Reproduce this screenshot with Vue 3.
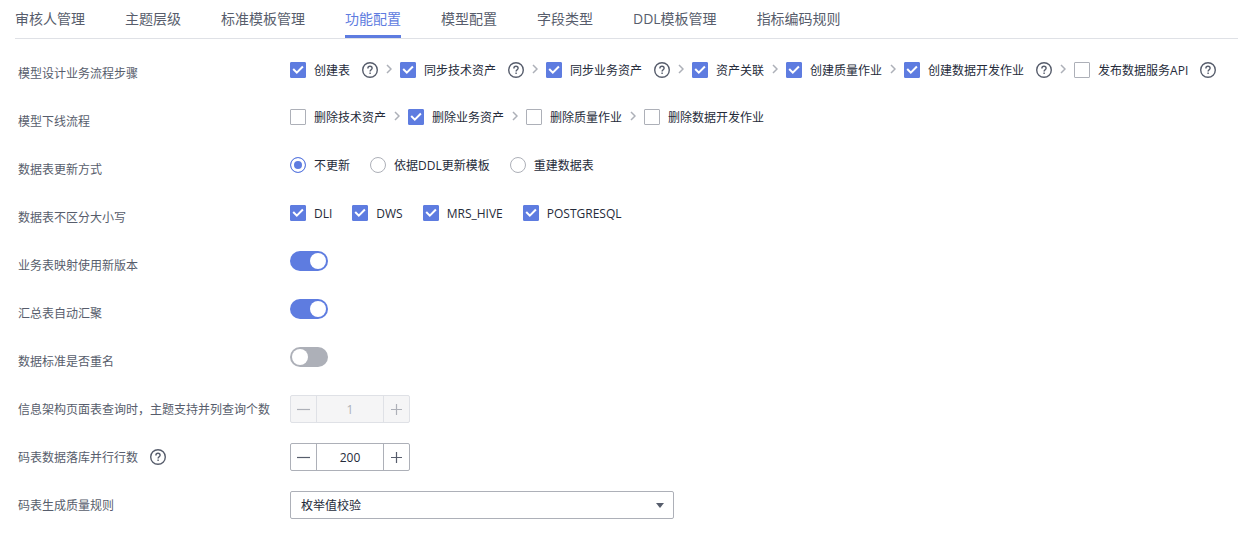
<script setup>
import { ref, reactive } from 'vue'

const tabs = ['审核人管理', '主题层级', '标准模板管理', '功能配置', '模型配置', '字段类型', 'DDL模板管理', '指标编码规则']
const activeTab = ref('功能配置')

const checkRows = reactive([
  {
    id: 'design',
    label: '模型设计业务流程步骤',
    steps: true,
    items: [
      { text: '创建表', checked: true, help: true },
      { text: '同步技术资产', checked: true, help: true },
      { text: '同步业务资产', checked: true, help: true },
      { text: '资产关联', checked: true },
      { text: '创建质量作业', checked: true },
      { text: '创建数据开发作业', checked: true, help: true },
      { text: '发布数据服务API', checked: false, help: true },
    ],
  },
  {
    id: 'offline',
    label: '模型下线流程',
    steps: true,
    items: [
      { text: '删除技术资产', checked: false },
      { text: '删除业务资产', checked: true },
      { text: '删除质量作业', checked: false },
      { text: '删除数据开发作业', checked: false },
    ],
  },
  { id: 'update', label: '数据表更新方式', radios: ['不更新', '依据DDL更新模板', '重建数据表'] },
  {
    id: 'case',
    label: '数据表不区分大小写',
    items: [
      { text: 'DLI', checked: true },
      { text: 'DWS', checked: true },
      { text: 'MRS_HIVE', checked: true },
      { text: 'POSTGRESQL', checked: true },
    ],
  },
])
const updateMode = ref('不更新')

const switches = reactive([
  { id: 'mapping', label: '业务表映射使用新版本', on: true },
  { id: 'summary', label: '汇总表自动汇聚', on: true },
  { id: 'rename', label: '数据标准是否重名', on: false },
])

const steppers = reactive([
  { id: 'query', label: '信息架构页面表查询时，主题支持并列查询个数', value: 1, disabled: true },
  { id: 'rows', label: '码表数据落库并行行数', value: 200, disabled: false, help: true },
])

const rule = ref('枚举值校验')
</script>

<template>
  <main class="page">
    <nav class="tabs" role="tablist">
      <button
        v-for="tab in tabs"
        :key="tab"
        type="button"
        role="tab"
        class="tab"
        :class="{ active: tab === activeTab }"
        :aria-selected="tab === activeTab"
        @click="activeTab = tab"
      >{{ tab }}</button>
    </nav>

    <form class="form" @submit.prevent>
      <div v-for="row in checkRows" :key="row.id" class="row" role="group" :aria-labelledby="row.id">
        <span :id="row.id" class="label">{{ row.label }}</span>
        <div v-if="row.radios" class="options spaced">
          <label v-for="r in row.radios" :key="r" class="option">
            <input v-model="updateMode" class="radio" type="radio" name="update-mode" :value="r" />
            <span class="text">{{ r }}</span>
          </label>
        </div>
        <div v-else class="options" :class="{ spaced: !row.steps }">
          <div v-for="(item, i) in row.items" :key="item.text" class="step" :class="{ tall: item.help }">
            <label class="option">
              <span class="check">
                <input v-model="item.checked" type="checkbox" />
                <svg v-if="item.checked" viewBox="0 0 16 16" aria-hidden="true">
                  <path d="M3.2 7l3.6 3.6L12.9 4.5" fill="none" stroke="#fff" stroke-width="2" />
                </svg>
              </span>
              <span class="text">{{ item.text }}</span>
            </label>
            <button v-if="item.help" type="button" class="help" aria-label="帮助">
              <svg viewBox="0 0 16 16" aria-hidden="true">
                <circle cx="8" cy="8" r="7.3" />
                <path d="M5.9 6.4c0-1.3.9-2.1 2.1-2.1s2.1.8 2.1 1.9c0 1.4-2 1.6-2 3.2M8.1 10.6v1.4" />
              </svg>
            </button>
            <svg v-if="row.steps && i < row.items.length - 1" class="chevron" viewBox="0 0 6 10" aria-hidden="true">
              <path d="M1 1l4 4-4 4" />
            </svg>
          </div>
        </div>
      </div>

      <div v-for="s in switches" :key="s.id" class="row">
        <label class="label" :for="s.id">{{ s.label }}</label>
        <div class="options">
          <input :id="s.id" v-model="s.on" class="switch" type="checkbox" role="switch" />
        </div>
      </div>

      <div v-for="s in steppers" :key="s.id" class="row">
        <div class="label">
          <label :for="s.id">{{ s.label }}</label>
          <button v-if="s.help" type="button" class="help" aria-label="帮助">
            <svg viewBox="0 0 16 16" aria-hidden="true">
              <circle cx="8" cy="8" r="7.3" />
              <path d="M5.9 6.4c0-1.3.9-2.1 2.1-2.1s2.1.8 2.1 1.9c0 1.4-2 1.6-2 3.2M8.1 10.6v1.4" />
            </svg>
          </button>
        </div>
        <div class="stepper" :class="{ disabled: s.disabled }">
          <button type="button" aria-label="减少" :disabled="s.disabled" @click="s.value--">
            <svg viewBox="0 0 13 13" aria-hidden="true"><path d="M0 6.5h13" /></svg>
          </button>
          <input :id="s.id" v-model.number="s.value" type="text" inputmode="numeric" :disabled="s.disabled" />
          <button type="button" aria-label="增加" :disabled="s.disabled" @click="s.value++">
            <svg viewBox="0 0 13 13" aria-hidden="true"><path d="M1 6.5h11M6.5 1v11" /></svg>
          </button>
        </div>
      </div>

      <div class="row">
        <label class="label" for="rule">码表生成质量规则</label>
        <div class="select">
          <select id="rule" v-model="rule">
            <option>枚举值校验</option>
          </select>
          <svg viewBox="0 0 8 5" aria-hidden="true"><path d="M0 0h8L4 5z" fill="#575d6c" /></svg>
        </div>
      </div>
    </form>
  </main>
</template>

<style>
body {
  background: #fff;
}
</style>

<style scoped>
.page {
  padding-left: 15px;
  color: #252b3a;
  font: 12px/20px "Open Sans", "Noto Sans CJK SC", sans-serif;
}
button,
input,
select {
  box-sizing: border-box;
  margin: 0;
  padding: 0;
  border: 0;
  background: none;
  color: inherit;
  font: inherit;
}
svg {
  display: block;
}
.tabs {
  display: flex;
  gap: 40px;
  border-bottom: 1px solid #dfe1e6;
}
.tab {
  height: 38px;
  border-bottom: 3px solid transparent;
  border-top: 3px solid transparent;
  color: #575d6c;
  font-size: 14px;
  white-space: nowrap;
}
.tab.active {
  border-bottom-color: #5e7ce0;
  color: #5e7ce0;
}
.form {
  display: flex;
  flex-direction: column;
  gap: 20px;
  padding: 20px 0 20px 3px;
}
.row {
  display: grid;
  grid-template-columns: 272px 1fr;
  align-items: start;
}
.label {
  display: flex;
  align-items: center;
  gap: 12px;
  line-height: 26px;
  padding-top: 2px;
  color: #575d6c;
  white-space: nowrap;
}
.label .help {
  margin-top: -2px;
}
.options {
  display: flex;
  flex-wrap: wrap;
  align-items: center;
}
.spaced {
  gap: 0 20px;
}
.step {
  display: flex;
  align-items: center;
  height: 20px;
}
.step.tall {
  height: 22px;
}
.option {
  display: flex;
  align-items: center;
  gap: 8px;
  white-space: nowrap;
}
.text {
  padding-top: 2px;
  line-height: 18px;
}
.check {
  display: grid;
  width: 16px;
  height: 16px;
}
.check > * {
  grid-area: 1 / 1;
  width: 16px;
  height: 16px;
}
.check svg {
  pointer-events: none;
}
.check input {
  appearance: none;
  border: 1px solid #adb0b8;
  border-radius: 1px;
  background: #fff;
}
.check input:checked {
  border-color: #5e7ce0;
  background: #5e7ce0;
}
.radio {
  appearance: none;
  width: 16px;
  height: 16px;
  border: 1px solid #adb0b8;
  border-radius: 50%;
}
.radio:checked {
  border-color: #5e7ce0;
  background: #5e7ce0;
  box-shadow: inset 0 0 0 3px #fff;
}
.help {
  width: 16px;
  height: 16px;
}
.step .help {
  margin-left: 12px;
}
.help svg {
  width: 16px;
  height: 16px;
  fill: none;
  stroke: #575d6c;
  stroke-width: 1.4;
}
.chevron {
  width: 6px;
  height: 10px;
  margin: 0 8px 2px;
  fill: none;
  stroke: #adb0b8;
  stroke-width: 1.5;
}
.switch {
  appearance: none;
  display: flex;
  width: 38px;
  height: 20px;
  padding: 2px;
  border-radius: 10px;
  background: #adb0b8;
}
.switch::before {
  content: "";
  width: 16px;
  height: 16px;
  border-radius: 50%;
  background: #fff;
}
.switch:checked {
  justify-content: flex-end;
  background: #5e7ce0;
}
.stepper {
  display: flex;
  box-sizing: border-box;
  width: 120px;
  height: 28px;
  border: 1px solid #adb0b8;
  border-radius: 2px;
}
.stepper button {
  display: grid;
  place-items: center;
  flex: none;
  width: 25px;
}
.stepper svg {
  width: 13px;
  height: 13px;
  stroke: #575d6c;
  stroke-width: 1.2;
}
.stepper input {
  flex: 1;
  min-width: 0;
  padding-top: 2px;
  border: solid #adb0b8;
  border-width: 0 1px;
  text-align: center;
}
.stepper.disabled,
.stepper.disabled input {
  border-color: #dfe1e6;
  background: #f5f5f6;
  color: #adb0b8;
}
.stepper.disabled svg {
  stroke: #adb0b8;
}
.select {
  display: grid;
  align-items: center;
  width: 100%;
  max-width: 384px;
}
.select > * {
  grid-area: 1 / 1;
}
.select select {
  appearance: none;
  width: 100%;
  height: 28px;
  padding: 2px 28px 0 10px;
  border: 1px solid #adb0b8;
  border-radius: 2px;
}
.select svg {
  justify-self: end;
  width: 8px;
  height: 5px;
  margin-right: 10px;
  pointer-events: none;
}
</style>
